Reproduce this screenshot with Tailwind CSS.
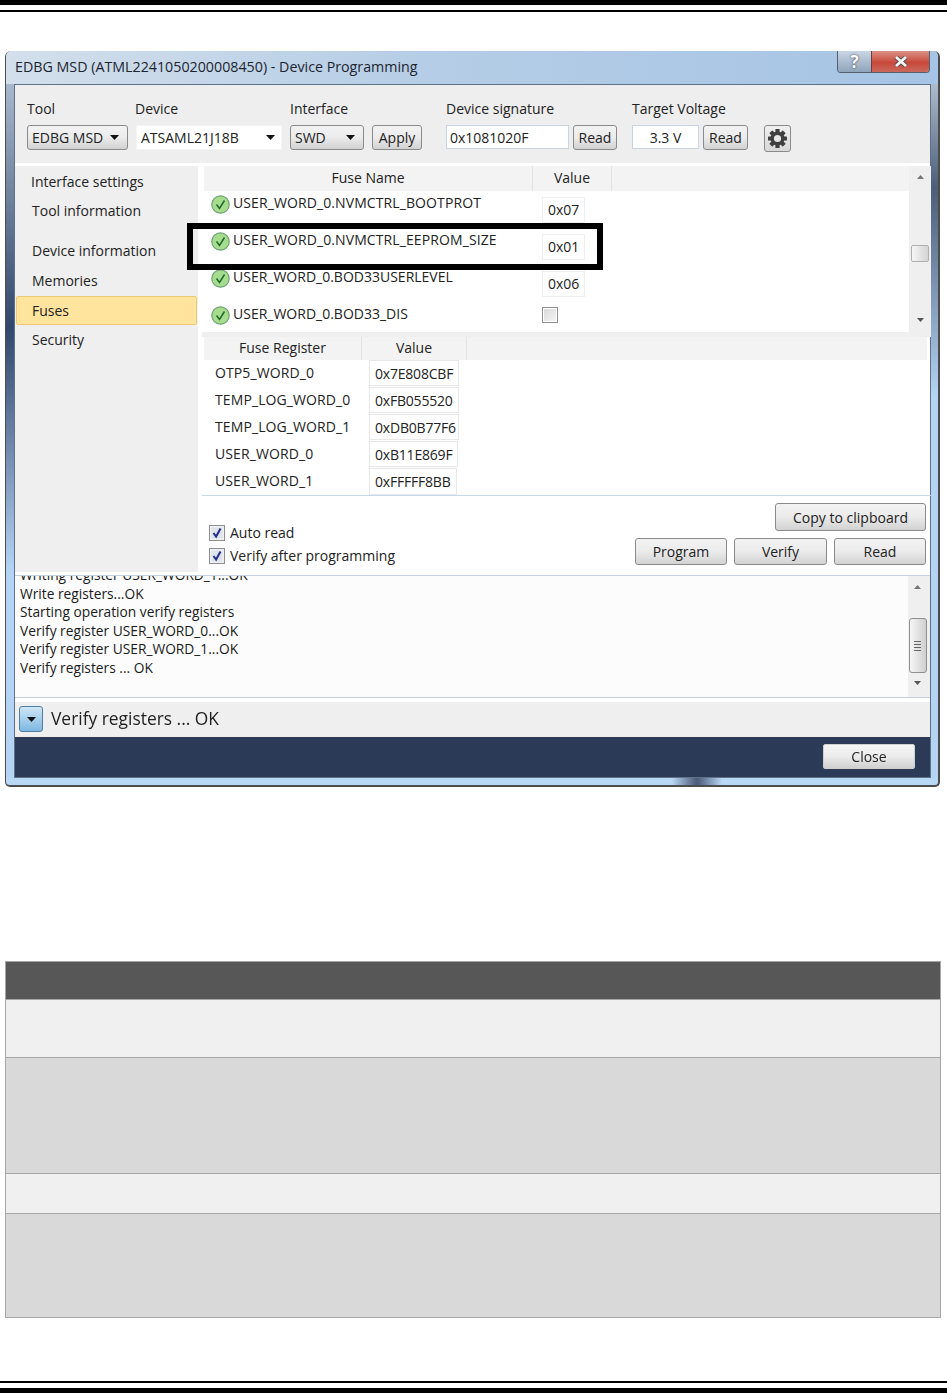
<!DOCTYPE html>
<html lang="en">
<head>
    <meta charset="UTF-8">
    <title>Device Programming</title>
    <script src="https://cdn.jsdelivr.net/npm/@tailwindcss/browser@4"></script>
</head>
<body class="bg-white font-['Open_Sans','Noto_Sans',sans-serif] text-[14px] text-[#222]">
<div class="relative w-[947px] h-[1393px] overflow-hidden">

    <!-- page header rules -->
    <div class="h-[5px] bg-black"></div>
    <div class="h-[2.5px] mt-[4.5px] bg-black"></div>

    <!-- dialog -->
    <div class="mt-[39px] ml-[5px] w-[935px] h-[736px] flex flex-col bg-[#b9d8f6] border-l border-r-2 border-b-2 border-[#4c4c4c] rounded-t-[6px] rounded-b-[5px] overflow-hidden blur-[0.35px]">
        <!-- title bar -->
        <div class="h-[33px] shrink-0 flex items-start justify-between bg-linear-to-r from-[#d3dfeb] via-[#b5cde6] via-45% to-[#a6c4e5]">
            <div class="pl-[9px] pt-[6px] text-[14.25px] leading-[20px] text-[#1c2530]">EDBG MSD (ATML2241050200008450) - Device Programming</div>
            <div class="flex mr-[8px] h-[22px] border border-t-0 border-[#54606e] rounded-b-[4px] overflow-hidden">
                <div class="w-[33px] flex items-center justify-center bg-linear-to-b from-[#c9d6e4] to-[#8fa4bb] text-[17px] font-bold text-white [text-shadow:0_0_2px_#222]">?</div>
                <div class="w-[58px] flex items-center justify-center bg-linear-to-b from-[#d99084] via-[#c8483a] via-55% to-[#c9695c] border-l border-[#7a3a34]">
                    <svg width="14" height="11" viewBox="0 0 14 11"><path d="M2 1l10 9M12 1L2 10" stroke="#4a4a4a" stroke-width="4.4"/><path d="M2 1l10 9M12 1L2 10" stroke="#f4f4f4" stroke-width="2.8"/></svg>
                </div>
            </div>
        </div>

        <div class="flex h-[694px] shrink-0">
            <div class="w-[8px] shrink-0 bg-linear-to-b from-[#a8b8cc] via-[#33476a] via-35% to-[#b5d4f3] to-70%"></div>

            <!-- client area -->
            <div class="w-[917px] shrink-0 flex flex-col border border-[#5d7188] bg-[#efefef]">
                <!-- toolbar -->
                <div class="h-[78px] shrink-0 flex items-start bg-[#eeeeee]">
                    <div class="ml-[12px] pt-[14px] w-[111px]">
                        <div class="h-[20px] leading-[20px]">Tool</div>
                        <div class="mt-[6px] w-[101px] h-[25px] flex items-center justify-between pl-[4px] pr-[8px] border border-[#8a8a8a] rounded-[3px] bg-linear-to-b from-[#f3f3f3] via-[#ebebeb] via-50% to-[#d2d2d2]">EDBG MSD<svg width="9" height="5" viewBox="0 0 9 5"><path d="M0 0h9L4.5 5z" fill="#111"/></svg></div>
                    </div>
                    <div class="w-[155px] pt-[14px] -ml-[3px]">
                        <div class="h-[20px] leading-[20px]">Device</div>
                        <div class="mt-[6px] w-[146px] h-[25px] ml-[1px] flex items-center justify-between pl-[4px] pr-[6px] bg-white border border-[#f4f4f4]">ATSAML21J18B<svg width="9" height="5" viewBox="0 0 9 5"><path d="M0 0h9L4.5 5z" fill="#111"/></svg></div>
                    </div>
                    <div class="pt-[14px] w-[82px]">
                        <div class="h-[20px] leading-[20px]">Interface</div>
                        <div class="mt-[6px] w-[74px] h-[25px] flex items-center justify-between pl-[4px] pr-[8px] border border-[#8a8a8a] rounded-[3px] bg-linear-to-b from-[#f3f3f3] via-[#ebebeb] via-50% to-[#d2d2d2]">SWD<svg width="9" height="5" viewBox="0 0 9 5"><path d="M0 0h9L4.5 5z" fill="#111"/></svg></div>
                    </div>
                    <div class="pt-[40px]">
                        <div class="w-[50px] h-[25px] flex items-center justify-center border border-[#8a8a8a] rounded-[3px] bg-linear-to-b from-[#f3f3f3] via-[#ebebeb] via-50% to-[#d2d2d2]">Apply</div>
                    </div>
                    <div class="ml-[24px] pt-[14px] w-[186px]">
                        <div class="h-[20px] leading-[20px]">Device signature</div>
                        <div class="mt-[6px] flex">
                            <div class="w-[123px] h-[24px] leading-[24px] pl-[3px] bg-white border border-[#c9d3e2]">0x1081020F</div>
                            <div class="ml-[4px] w-[44px] h-[25px] flex items-center justify-center border border-[#8a8a8a] rounded-[3px] bg-linear-to-b from-[#f3f3f3] via-[#ebebeb] via-50% to-[#d2d2d2]">Read</div>
                        </div>
                    </div>
                    <div class="pt-[14px] w-[132px]">
                        <div class="h-[20px] leading-[20px]">Target Voltage</div>
                        <div class="mt-[6px] flex">
                            <div class="w-[67px] h-[24px] leading-[24px] text-center bg-white border border-[#c9d3e2]">3.3 V</div>
                            <div class="ml-[4px] w-[45px] h-[25px] flex items-center justify-center border border-[#8a8a8a] rounded-[3px] bg-linear-to-b from-[#f3f3f3] via-[#ebebeb] via-50% to-[#d2d2d2]">Read</div>
                        </div>
                    </div>
                    <div class="pt-[40px]">
                        <div class="w-[27px] h-[27px] flex items-center justify-center border border-[#8a8a8a] rounded-[3px] bg-linear-to-b from-[#f0f0f0] to-[#d8d8d8]">
                            <svg width="21" height="21" viewBox="0 0 21 21">
                                <g fill="#3f3f3f">
                                    <rect x="8.4" y="1" width="4.2" height="19" rx="0.6"/>
                                    <rect x="8.4" y="1" width="4.2" height="19" rx="0.6" transform="rotate(45 10.5 10.5)"/>
                                    <rect x="8.4" y="1" width="4.2" height="19" rx="0.6" transform="rotate(90 10.5 10.5)"/>
                                    <rect x="8.4" y="1" width="4.2" height="19" rx="0.6" transform="rotate(135 10.5 10.5)"/>
                                    <circle cx="10.5" cy="10.5" r="7"/>
                                </g>
                                <circle cx="10.5" cy="10.5" r="3.6" fill="#e6e6e6"/>
                            </svg>
                        </div>
                    </div>
                </div>

                <div class="h-[3px] shrink-0 bg-white"></div>

                <div class="h-[409px] shrink-0 flex bg-white">
                    <!-- sidebar -->
                    <div class="w-[183px] h-[406px] shrink-0 bg-[#efefef] flex flex-col">
                        <div class="h-[32px] pl-[16px] pt-[6px] leading-[20px]">Interface settings</div>
                        <div class="h-[40px] pl-[17px] pt-[3px] leading-[20px]">Tool information</div>
                        <div class="h-[30px] pl-[17px] pt-[3px] leading-[20px]">Device information</div>
                        <div class="h-[28px] pl-[17px] pt-[3px] leading-[20px]">Memories</div>
                        <div class="ml-[1px] w-[181px] h-[29px] pl-[15px] flex items-center bg-[#ffe49d] border border-[#ecc873] rounded-[2px]">Fuses</div>
                        <div class="pl-[17px] pt-[5px] leading-[20px]">Security</div>
                    </div>

                    <!-- fuse panel -->
                    <div class="w-[733px] flex flex-col">
                        <div class="h-[166px] shrink-0 flex">
                            <div class="w-[711px] pl-[6px]">
                                <div class="h-[25px] flex bg-[#f3f3f3] leading-[24px]">
                                    <div class="w-[329px] text-center border-r border-[#e2e2e2]">Fuse Name</div>
                                    <div class="w-[79px] text-center border-r border-[#e2e2e2]">Value</div>
                                </div>
                                <div class="flex h-[37px]">
                                    <svg class="mt-[4px] ml-[7px]" width="19" height="19" viewBox="0 0 19 19"><circle cx="9.5" cy="9.5" r="8.7" fill="#a6dc8e" stroke="#6fa277" stroke-width="1.2"/><path d="M5.5 9.5l3 4 5-8" fill="none" stroke="#1e6a2c" stroke-width="1.5"/></svg>
                                    <div class="w-[310px] ml-[3px] pt-[2px] leading-[20px] tracking-[0.1px]">USER_WORD_0.NVMCTRL_BOOTPROT</div>
                                    <div class="mt-[6px] -ml-[1px] w-[43px] h-[26px] leading-[24px] pl-[5px] bg-white border border-[#efefef] shrink-0">0x07</div>
                                </div>
                                <div class="flex h-[37px]">
                                    <svg class="mt-[4px] ml-[7px]" width="19" height="19" viewBox="0 0 19 19"><circle cx="9.5" cy="9.5" r="8.7" fill="#a6dc8e" stroke="#6fa277" stroke-width="1.2"/><path d="M5.5 9.5l3 4 5-8" fill="none" stroke="#1e6a2c" stroke-width="1.5"/></svg>
                                    <div class="w-[310px] ml-[3px] pt-[2px] leading-[20px] tracking-[0.1px]">USER_WORD_0.NVMCTRL_EEPROM_SIZE</div>
                                    <div class="mt-[6px] -ml-[1px] w-[43px] h-[26px] leading-[24px] pl-[5px] bg-white border border-[#efefef] shrink-0">0x01</div>
                                </div>
                                <div class="flex h-[37px]">
                                    <svg class="mt-[4px] ml-[7px]" width="19" height="19" viewBox="0 0 19 19"><circle cx="9.5" cy="9.5" r="8.7" fill="#a6dc8e" stroke="#6fa277" stroke-width="1.2"/><path d="M5.5 9.5l3 4 5-8" fill="none" stroke="#1e6a2c" stroke-width="1.5"/></svg>
                                    <div class="w-[310px] ml-[3px] pt-[2px] leading-[20px]">USER_WORD_0.BOD33USERLEVEL</div>
                                    <div class="mt-[6px] -ml-[1px] w-[43px] h-[26px] leading-[24px] pl-[5px] bg-white border border-[#efefef] shrink-0">0x06</div>
                                </div>
                                <div class="flex h-[30px]">
                                    <svg class="mt-[4px] ml-[7px]" width="19" height="19" viewBox="0 0 19 19"><circle cx="9.5" cy="9.5" r="8.7" fill="#a6dc8e" stroke="#6fa277" stroke-width="1.2"/><path d="M5.5 9.5l3 4 5-8" fill="none" stroke="#1e6a2c" stroke-width="1.5"/></svg>
                                    <div class="w-[310px] ml-[3px] pt-[2px] leading-[20px]">USER_WORD_0.BOD33_DIS</div>
                                    <div class="mt-[5px] -ml-[1px] w-[16px] h-[16px] border border-[#8e8e8e] bg-linear-to-br from-[#d8d8d8] to-[#f6f6f6] shrink-0 outline outline-white -outline-offset-2"></div>
                                </div>
                            </div>
                            <!-- scrollbar -->
                            <div class="w-[22px] h-[166px] relative bg-[#efefef] flex flex-col items-center">
                                <svg class="mt-[9px]" width="7" height="4" viewBox="0 0 7 4"><path d="M0 4h7L3.5 0z" fill="#777"/></svg>
                                <div class="mt-[66px] w-[18px] h-[17px] border border-[#b0b0b0] rounded-[2px] bg-linear-to-r from-[#f6f6f6] to-[#d4d4d4]"></div>
                                <svg class="mt-[56px]" width="7" height="4" viewBox="0 0 7 4"><path d="M0 0h7L3.5 4z" fill="#555"/></svg>
                            </div>
                        </div>
                        <div class="ml-[4px] h-[5px] shrink-0 bg-[#efefef]"></div>
                        <div class="ml-[6px] mr-[4px] h-[23px] shrink-0 flex bg-[#f3f3f3] leading-[22px]">
                            <div class="w-[158px] text-center border-r border-[#e2e2e2]">Fuse Register</div>
                            <div class="w-[105px] text-center border-r border-[#e2e2e2]">Value</div>
                        </div>
                        <!-- register rows -->
                        <div class="ml-[4px] h-[136px] shrink-0 border-b border-[#c7d8ea]">
                            <div class="h-[27px] flex">
                                <div class="w-[167px] pl-[13px] pt-[3px] leading-[20px] tracking-[0.1px]">OTP5_WORD_0</div>
                                <div class="w-[90px] h-[26px] leading-[25px] pl-[5px] border border-[#e8e8e8] tracking-[-0.2px]">0x7E808CBF</div>
                            </div>
                            <div class="h-[27px] flex">
                                <div class="w-[167px] pl-[13px] pt-[3px] leading-[20px] tracking-[0.1px]">TEMP_LOG_WORD_0</div>
                                <div class="w-[90px] h-[26px] leading-[25px] pl-[5px] border border-[#e8e8e8] tracking-[-0.2px]">0xFB055520</div>
                            </div>
                            <div class="h-[27px] flex">
                                <div class="w-[167px] pl-[13px] pt-[3px] leading-[20px] tracking-[0.1px]">TEMP_LOG_WORD_1</div>
                                <div class="w-[90px] h-[26px] leading-[25px] pl-[5px] border border-[#e8e8e8] tracking-[-0.2px]">0xDB0B77F6</div>
                            </div>
                            <div class="h-[27px] flex">
                                <div class="w-[167px] pl-[13px] pt-[3px] leading-[20px] tracking-[0.1px]">USER_WORD_0</div>
                                <div class="w-[89px] h-[26px] leading-[25px] pl-[5px] border border-[#e8e8e8] tracking-[-0.2px]">0xB11E869F</div>
                            </div>
                            <div class="h-[27px] flex">
                                <div class="w-[167px] pl-[13px] pt-[3px] leading-[20px] tracking-[0.1px]">USER_WORD_1</div>
                                <div class="w-[88px] h-[27px] leading-[25px] pl-[5px] border border-[#e8e8e8] tracking-[-0.2px]">0xFFFFF8BB</div>
                            </div>
                        </div>
                        <!-- options and actions -->
                        <div class="flex-1 flex justify-between">
                            <div class="pl-[11px] pt-[25px]">
                                <div class="h-[23px] flex items-center gap-[5px]">
                                    <svg width="16" height="16" viewBox="0 0 16 16"><rect x="0.5" y="0.5" width="15" height="15" fill="#eef0f4" stroke="#8e8e8e"/><rect x="2.5" y="2.5" width="11" height="11" fill="#dfe3ea"/><path d="M4.5 8l2.6 3.6L11.5 3.5" fill="none" stroke="#24308a" stroke-width="2"/></svg>
                                    <span>Auto read</span>
                                </div>
                                <div class="h-[23px] flex items-center gap-[5px]">
                                    <svg width="16" height="16" viewBox="0 0 16 16"><rect x="0.5" y="0.5" width="15" height="15" fill="#eef0f4" stroke="#8e8e8e"/><rect x="2.5" y="2.5" width="11" height="11" fill="#dfe3ea"/><path d="M4.5 8l2.6 3.6L11.5 3.5" fill="none" stroke="#24308a" stroke-width="2"/></svg>
                                    <span>Verify after programming</span>
                                </div>
                            </div>
                            <div class="pr-[5px] pt-[7px] flex flex-col items-end gap-[7px]">
                                <div class="w-[151px] h-[28px] flex items-center justify-center border border-[#8a8a8a] rounded-[3px] bg-linear-to-b from-[#f3f3f3] via-[#ebebeb] via-50% to-[#d2d2d2]">Copy to clipboard</div>
                                <div class="flex gap-[7px]">
                                    <div class="w-[92px] h-[27px] flex items-center justify-center border border-[#8a8a8a] rounded-[3px] bg-linear-to-b from-[#f3f3f3] via-[#ebebeb] via-50% to-[#d2d2d2]">Program</div>
                                    <div class="w-[93px] h-[27px] flex items-center justify-center border border-[#8a8a8a] rounded-[3px] bg-linear-to-b from-[#f3f3f3] via-[#ebebeb] via-50% to-[#d2d2d2]">Verify</div>
                                    <div class="w-[92px] h-[27px] flex items-center justify-center border border-[#8a8a8a] rounded-[3px] bg-linear-to-b from-[#f3f3f3] via-[#ebebeb] via-50% to-[#d2d2d2]">Read</div>
                                </div>
                            </div>
                        </div>
                    </div>
                </div>

                <!-- log -->
                <div class="h-[123px] shrink-0 flex bg-[#fcfcfc] border-y border-[#c3cfdf] overflow-hidden">
                    <div class="w-[893px] pl-[5px] -mt-[10px] text-[13.75px] leading-[18.5px] text-[#1a1a1a]">
                        <div>Writing register USER_WORD_1...OK</div>
                        <div>Write registers...OK</div>
                        <div>Starting operation verify registers</div>
                        <div>Verify register USER_WORD_0...OK</div>
                        <div>Verify register USER_WORD_1...OK</div>
                        <div>Verify registers ... OK</div>
                    </div>
                    <div class="w-[22px] bg-[#efefef] flex flex-col items-center pr-[3px]">
                        <svg class="mt-[9px]" width="7" height="4" viewBox="0 0 7 4"><path d="M0 4h7L3.5 0z" fill="#777"/></svg>
                        <div class="mt-[29px] w-[18px] h-[55px] flex flex-col items-center justify-center gap-[2px] border border-[#8f8f8f] rounded-[3px] bg-linear-to-r from-[#f6f6f6] to-[#cfcfcf]">
                            <div class="w-[7px] h-px bg-[#666]"></div>
                            <div class="w-[7px] h-px bg-[#666]"></div>
                            <div class="w-[7px] h-px bg-[#666]"></div>
                            <div class="w-[7px] h-px bg-[#666]"></div>
                        </div>
                        <svg class="mt-[8px]" width="7" height="4" viewBox="0 0 7 4"><path d="M0 0h7L3.5 4z" fill="#555"/></svg>
                    </div>
                </div>

                <!-- status line -->
                <div class="h-[39px] shrink-0 flex items-start border-t-4 border-white bg-[#efefef]">
                    <div class="ml-[4px] mt-[4px] w-[24px] h-[26px] flex items-center justify-center border border-[#4f7ea3] rounded-[3px] bg-linear-to-b from-[#cfe6f6] to-[#7db8e2]">
                        <svg width="9" height="5" viewBox="0 0 9 5"><path d="M0 0h9L4.5 5z" fill="#111"/></svg>
                    </div>
                    <div class="ml-[8px] mt-[1px] text-[17.4px] leading-[30px]">Verify registers ... OK</div>
                </div>

                <!-- footer -->
                <div class="flex-1 flex justify-end bg-[#2b3a56] pt-[7px] pr-[15px]">
                    <div class="w-[92px] h-[25px] flex items-center justify-center rounded-[2px] border border-[#d0d0d0] bg-linear-to-b from-[#f5f5f5] via-[#ececec] via-50% to-[#d0d0d0]">Close</div>
                </div>
            </div>

            <div class="w-[8px] shrink-0 bg-linear-to-b from-[#aebccd] via-[#4c5f78] via-15% to-[#b5d4f3] to-45%"></div>
        </div>
        <div class="flex-1 flex justify-end pr-[216px]">
            <div class="w-[50px] bg-linear-to-r from-[#b9d8f6] via-[#4a5a78] to-[#b9d8f6]"></div>
        </div>
    </div>

    <!-- callout around the EEPROM size row -->
    <div class="absolute left-[187px] top-[223px] w-[416px] h-[47px] border-[6px] border-black"></div>

    <!-- description table -->
    <div class="mt-[174px] ml-[5px] w-[936px] border border-[#a6a6a6]">
        <div class="h-[38px] bg-[#575757] border-b border-[#a6a6a6]"></div>
        <div class="h-[58px] bg-[#f0f0f0] border-b border-[#a6a6a6]"></div>
        <div class="h-[116px] bg-[#d9d9d9] border-b border-[#a6a6a6]"></div>
        <div class="h-[40px] bg-[#f0f0f0] border-b border-[#a6a6a6]"></div>
        <div class="h-[103px] bg-[#d9d9d9]"></div>
    </div>

    <!-- page footer rules -->
    <div class="absolute left-0 right-0 top-[1381px] h-[2px] bg-black"></div>
    <div class="absolute left-0 right-0 top-[1388px] h-[5px] bg-black"></div>
</div>
</body>
</html>
